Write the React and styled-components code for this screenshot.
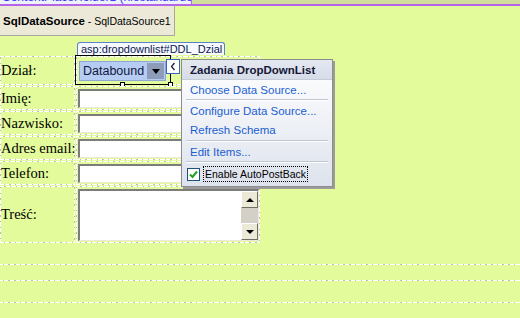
import React from "react";
import styled, { createGlobalStyle } from "styled-components";

const GlobalStyle = createGlobalStyle`
  html, body {
    margin: 0;
    padding: 0;
    background: #e3fb9b;
    overflow: hidden;
  }
`;

const dashed = "repeating-linear-gradient(45deg, #ffffff 0 3px, #bcbfb2 3px 4px)";

const Page = styled.div`
  width: 520px;
  height: 318px;
  background: #e3fb9b;
  font-family: "Liberation Sans", Arial, sans-serif;
  overflow: hidden;
`;

// top of the content placeholder, mostly scrolled out of view
const TopStrip = styled.div`
  display: flex;
  height: 6px;
`;

const PlaceholderTab = styled.div`
  width: 191px;
  height: 4px;
  overflow: hidden;
  background: #eef0fa;
  border-right: 1px solid #b464e8;
  border-bottom: 2px solid #b464e8;
  color: #3a3aff;
  font-size: 12px;
  line-height: 12px;
  white-space: nowrap;

  span {
    display: block;
    margin-top: -9px;
    padding-left: 2px;
  }
`;

const PlaceholderFill = styled.div`
  flex: 1;
  height: 4px;
  background: #d2dc9c;
  border-bottom: 2px solid #b464e8;
`;

const DataSourceBox = styled.div`
  width: 175px;
  height: 30px;
  background: #ece9d8;
  border-right: 1px solid #a8a8a0;
  border-bottom: 1px solid #a8a8a0;
  display: flex;
  align-items: center;
  padding-left: 3px;
  box-sizing: border-box;
  font-size: 10.5px;
  color: #000;
  white-space: nowrap;

  b {
    font-size: 11.5px;
    margin-right: 3px;
  }
`;

const FormArea = styled.div`
  position: relative;
  padding-top: 6px;
`;

const TagLabel = styled.div`
  margin-left: 77px;
  width: 148px;
  height: 13px;
  box-sizing: border-box;
  border: 1px solid #5a82c4;
  border-bottom: none;
  border-radius: 3px 3px 0 0;
  background: #f6f9ff;
  color: #101850;
  font-size: 11px;
  line-height: 13px;
  padding-left: 3px;
  white-space: nowrap;
`;

const FormTable = styled.div`
  display: grid;
  grid-template-columns: 75px 184px;
  column-gap: 1px;
  row-gap: 1px;
  margin-top: 1px;
`;

const Cell = styled.div`
  box-sizing: border-box;
  height: ${(p) => p.$h}px;
  border: 1px solid transparent;
  border-image: ${dashed} 1;
  position: relative;
  display: flex;
  align-items: ${(p) => (p.$top ? "flex-start" : "center")};
  padding: ${(p) => (p.$top ? "2px 0 0 1px" : "0 0 0 1px")};
`;

const Label = styled.span`
  font-family: "Liberation Serif", "Times New Roman", serif;
  font-size: 14.5px;
  color: #000;
  margin-left: -1px;
  white-space: nowrap;
`;

const TextBox = styled.div`
  width: 178px;
  height: 19px;
  box-sizing: border-box;
  background: #fff;
  border-style: solid;
  border-width: 2px 1px 1px 2px;
  border-color: #7c7c78 #ece9d8 #ece9d8 #7c7c78;
`;

const TextArea = styled.div`
  width: 181px;
  height: 52px;
  box-sizing: border-box;
  background: #fff;
  border-style: solid;
  border-width: 2px 1px 1px 2px;
  border-color: #7c7c78 #ece9d8 #ece9d8 #7c7c78;
  display: flex;
  justify-content: flex-end;
`;

const ScrollBar = styled.div`
  width: 17px;
  display: flex;
  flex-direction: column;
  justify-content: space-between;
  background: #d4d0c8;
`;

const ScrollButton = styled.div`
  height: 17px;
  box-sizing: border-box;
  background: #ece9d8;
  border-style: solid;
  border-width: 1px;
  border-color: #fff #716f64 #716f64 #fff;
  display: flex;
  align-items: center;
  justify-content: center;

  &::after {
    content: "";
    border-left: 4px solid transparent;
    border-right: 4px solid transparent;
    ${(p) =>
      p.$up ? "border-bottom: 4px solid #000;" : "border-top: 4px solid #000;"}
  }
`;

const DropDown = styled.div`
  margin: 2px 0 0 1px;
  width: 87px;
  height: 20px;
  box-sizing: border-box;
  background: #b6ccf2;
  border: 1px solid #8ea6d4;
  display: flex;
  align-items: center;
  justify-content: space-between;
  padding: 0 1px 0 3px;
  color: #101840;
  font-size: 12.5px;
`;

const DropArrow = styled.div`
  width: 17px;
  height: 16px;
  background: #8d9cb8;
  display: flex;
  align-items: center;
  justify-content: center;

  &::after {
    content: "";
    border-left: 4px solid transparent;
    border-right: 4px solid transparent;
    border-top: 5px solid #000;
  }
`;

const Selection = styled.div`
  position: absolute;
  left: -2px;
  top: -2px;
  width: 96px;
  height: 30px;
  box-sizing: border-box;
  border: 1px solid #000;
  pointer-events: none;
`;

const Handle = styled.div`
  position: absolute;
  bottom: -3px;
  left: ${(p) => p.$x}px;
  width: 5px;
  height: 5px;
  box-sizing: border-box;
  background: #fff;
  border: 1px solid #000;
`;

const SmartTagButton = styled.div`
  position: absolute;
  left: 166px;
  top: 23px;
  width: 14px;
  height: 15px;
  box-sizing: border-box;
  background: #fff;
  border: 1px solid #3a64c0;
  display: flex;
  align-items: center;
  justify-content: center;
`;

const SmartPanel = styled.div`
  position: absolute;
  left: 181px;
  top: 23px;
  width: 152px;
  height: 128px;
  box-sizing: border-box;
  border: 1px solid #8c8c8c;
  background: linear-gradient(#ffffff 0%, #f2f4f8 40%, #dde2ec 100%);
  box-shadow: 2px 2px 0 #9c9c9c;
  display: flex;
  flex-direction: column;
`;

const PanelHeader = styled.div`
  height: 19px;
  flex: none;
  background: linear-gradient(#e4e8f0, #d6dce8);
  border-bottom: 1px solid #c4ccd8;
  font-weight: bold;
  font-size: 11.5px;
  color: #141838;
  display: flex;
  align-items: center;
  padding-left: 8px;
`;

const PanelBody = styled.div`
  padding: 0 4px;
  display: flex;
  flex-direction: column;
`;

const TaskLink = styled.div`
  height: ${(p) => p.$h || 19}px;
  display: flex;
  align-items: center;
  padding-left: 4px;
  font-size: 11.5px;
  color: #1a5ed2;
  white-space: nowrap;
`;

const Separator = styled.div`
  height: 1px;
  background: #c0c6d2;
  border-bottom: 1px solid #ffffff;
`;

const CheckRow = styled.div`
  display: flex;
  align-items: center;
  height: 22px;
  padding-left: 1px;
  gap: 3px;
`;

const CheckBox = styled.div`
  width: 13px;
  height: 13px;
  box-sizing: border-box;
  background: #fff;
  border: 1px solid #1c5180;
  display: flex;
  align-items: center;
  justify-content: center;
`;

const FocusLabel = styled.span`
  font-size: 10.5px;
  color: #000;
  border: 1px dotted #000;
  padding: 1px 1px;
  line-height: 12px;
  white-space: nowrap;
`;

const Rule = styled.div`
  height: ${(p) => p.$gap}px;
  border-bottom: 1px solid transparent;
  border-image: ${dashed} 1;
  border-image-width: 0 0 1px 0;
`;

const rows = ["Imię:", "Nazwisko:", "Adres email:", "Telefon:"];

export default function App() {
  return (
    <Page>
      <GlobalStyle />
      <TopStrip>
        <PlaceholderTab>
          <span>ContentPlaceHolder1 (niestandardowy)</span>
        </PlaceholderTab>
        <PlaceholderFill />
      </TopStrip>
      <DataSourceBox>
        <b>SqlDataSource</b> - SqlDataSource1
      </DataSourceBox>

      <FormArea>
        <TagLabel>asp:dropdownlist#DDL_Dzial</TagLabel>
        <FormTable>
          <Cell $h={29}>
            <Label>Dział:</Label>
          </Cell>
          <Cell $h={29} $top>
            <DropDown>
              Databound
              <DropArrow />
            </DropDown>
            <Selection>
              <Handle $x={44} />
              <Handle $x={92} />
            </Selection>
          </Cell>

          {rows.map((label) => (
            <React.Fragment key={label}>
              <Cell $h={24}>
                <Label>{label}</Label>
              </Cell>
              <Cell $h={24}>
                <TextBox />
              </Cell>
            </React.Fragment>
          ))}

          <Cell $h={57}>
            <Label>Treść:</Label>
          </Cell>
          <Cell $h={57} $top>
            <TextArea>
              <ScrollBar>
                <ScrollButton $up />
                <ScrollButton />
              </ScrollBar>
            </TextArea>
          </Cell>
        </FormTable>

        <SmartTagButton>
          <svg width="6" height="9" viewBox="0 0 6 9">
            <path d="M4.5 1 L1.5 4.5 L4.5 8" fill="none" stroke="#202040" strokeWidth="1.3" />
          </svg>
        </SmartTagButton>
        <SmartPanel>
          <PanelHeader>Zadania DropDownList</PanelHeader>
          <PanelBody>
            <TaskLink>Choose Data Source...</TaskLink>
            <Separator />
            <TaskLink>Configure Data Source...</TaskLink>
            <TaskLink $h={20}>Refresh Schema</TaskLink>
            <Separator />
            <TaskLink>Edit Items...</TaskLink>
            <Separator />
            <CheckRow>
              <CheckBox>
                <svg width="9" height="9" viewBox="0 0 9 9">
                  <path
                    d="M1 4.5 L3.5 7 L8 1.5"
                    fill="none"
                    stroke="#21a121"
                    strokeWidth="2"
                  />
                </svg>
              </CheckBox>
              <FocusLabel>Enable AutoPostBack</FocusLabel>
            </CheckRow>
          </PanelBody>
        </SmartPanel>
      </FormArea>

      <Rule $gap={21} />
      <Rule $gap={15} />
      <Rule $gap={21} />
    </Page>
  );
}
